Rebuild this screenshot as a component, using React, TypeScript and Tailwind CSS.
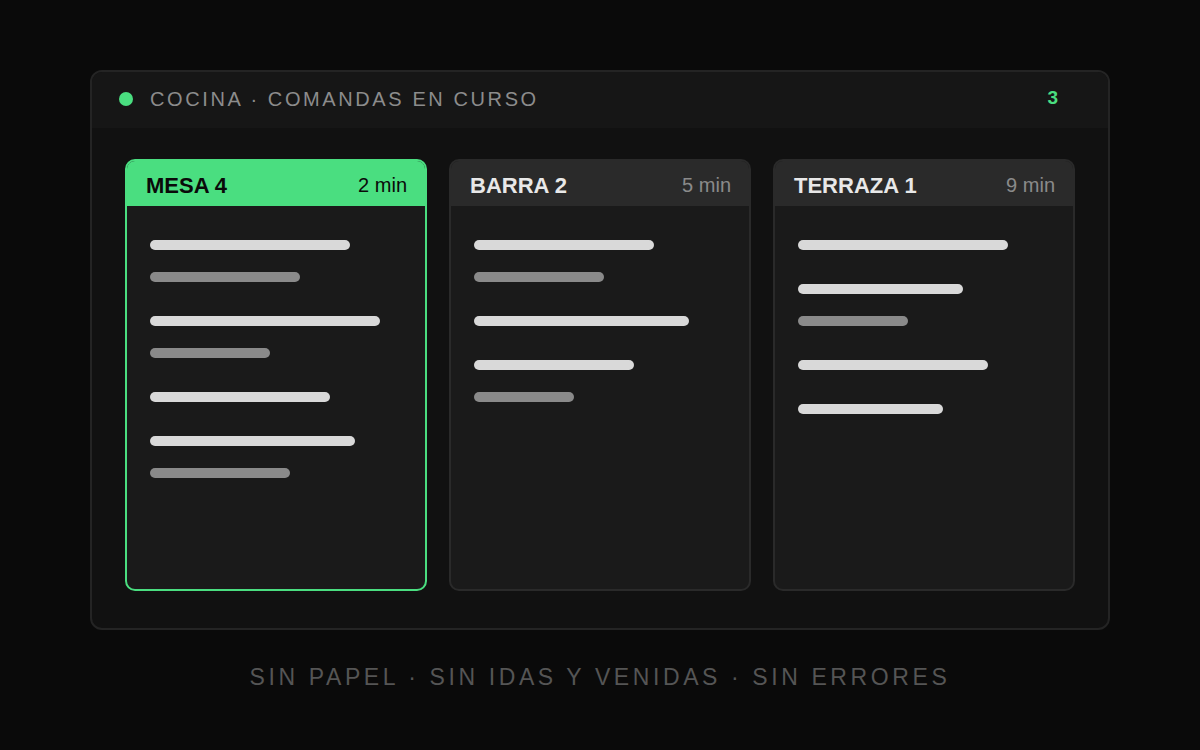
const font = { fontFamily: '"Liberation Sans", Arial, sans-serif' };

type Item = { main: number; sub?: number };
type Order = { name: string; time: string; active?: boolean; items: Item[] };

const orders: Order[] = [
  {
    name: 'MESA 4',
    time: '2 min',
    active: true,
    items: [{ main: 200, sub: 150 }, { main: 230, sub: 120 }, { main: 180 }, { main: 205, sub: 140 }],
  },
  {
    name: 'BARRA 2',
    time: '5 min',
    items: [{ main: 180, sub: 130 }, { main: 215 }, { main: 160, sub: 100 }],
  },
  {
    name: 'TERRAZA 1',
    time: '9 min',
    items: [{ main: 210 }, { main: 165, sub: 110 }, { main: 190 }, { main: 145 }],
  },
];

function OrderCard({ order }: { order: Order }) {
  return (
    <div
      className={`flex h-[432px] flex-col overflow-hidden rounded-[10px] border-2 bg-[#1a1a1a] ${
        order.active ? 'border-[#4ade80]' : 'border-[#2a2a2a]'
      }`}
    >
      <div
        className={`flex h-[45px] shrink-0 items-center justify-between pl-[19px] pr-[18px] pt-[3px] ${
          order.active ? 'bg-[#4ade80]' : 'bg-[#2a2a2a]'
        }`}
      >
        <span className={`text-[22px] font-bold ${order.active ? 'text-[#0a0a0a]' : 'text-[#e8e8e8]'}`}>
          {order.name}
        </span>
        <span className={`text-[20px] ${order.active ? 'text-[#0a0a0a]' : 'text-[#8a8a8a]'}`}>{order.time}</span>
      </div>
      <div className="flex flex-col gap-[34px] px-[23px] pt-[34px]">
        {order.items.map((it, i) => (
          <div key={i} className="flex flex-col gap-[22px]">
            <div className="h-[10px] rounded-full bg-[#d9d9d9]" style={{ width: it.main }} />
            {it.sub && <div className="h-[10px] rounded-full bg-[#8a8a8a]" style={{ width: it.sub }} />}
          </div>
        ))}
      </div>
    </div>
  );
}

export default function App() {
  return (
    <div className="flex min-h-[750px] flex-col items-center bg-[#0a0a0a] pt-[70px]" style={font}>
      <div className="w-[1020px] overflow-hidden rounded-[12px] border-2 border-[#242424] bg-[#111111]">
        <div className="flex h-[56px] items-center justify-between bg-[#161616] pb-[3px] pl-[27px] pr-[50px]">
          <div className="flex items-center gap-[17px]">
            <span className="h-[14px] w-[14px] rounded-full bg-[#4ade80]" />
            <span className="text-[20px] tracking-[2.6px] text-[#8c8c8c]">COCINA · COMANDAS EN CURSO</span>
          </div>
          <span className="text-[19px] font-bold text-[#4ade80]">3</span>
        </div>
        <div className="grid grid-cols-3 gap-[22px] px-[33px] pb-[37px] pt-[31px]">
          {orders.map((o) => (
            <OrderCard key={o.name} order={o} />
          ))}
        </div>
      </div>
      <p className="mt-[30px] text-[23px] tracking-[3.6px] text-[#555555]">SIN PAPEL · SIN IDAS Y VENIDAS · SIN ERRORES</p>
    </div>
  );
}
